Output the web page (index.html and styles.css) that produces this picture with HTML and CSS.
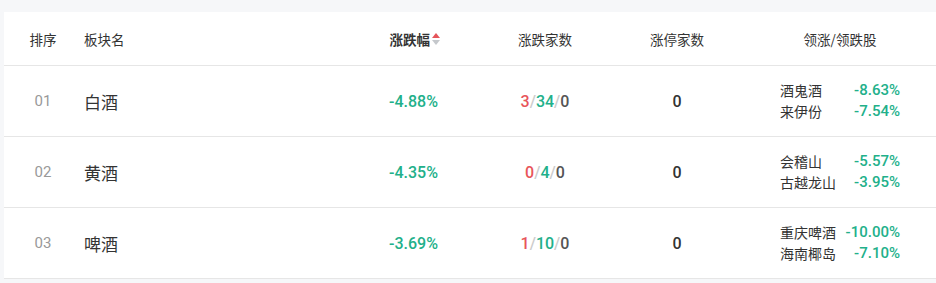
FILE: index.html
```html
<!DOCTYPE html>
<html lang="zh-CN">
<head>
<meta charset="utf-8">
<link rel="stylesheet" href="styles.css">
</head>
<body>
<div class="panel">
  <div class="row head">
    <div class="c-idx">排序</div>
    <div class="c-name">板块名</div>
    <div class="c-chg sort">涨跌幅<span class="arrows"><i class="up"></i><i class="down"></i></span></div>
    <div class="c-cnt">涨跌家数</div>
    <div class="c-lim">涨停家数</div>
    <div class="c-lead">领涨/领跌股</div>
  </div>
  <div class="row">
    <div class="c-idx num">01</div>
    <div class="c-name bname">白酒</div>
    <div class="c-chg num green">-4.88%</div>
    <div class="c-cnt num"><span class="red">3</span><span class="sl">/</span><span class="green">34</span><span class="sl">/</span><span class="dk">0</span></div>
    <div class="c-lim num dk">0</div>
    <div class="c-lead"><div class="stocks"><div class="st"><span>酒鬼酒</span><span class="num green">-8.63%</span></div><div class="st"><span>来伊份</span><span class="num green">-7.54%</span></div></div></div>
  </div>
  <div class="row">
    <div class="c-idx num">02</div>
    <div class="c-name bname">黄酒</div>
    <div class="c-chg num green">-4.35%</div>
    <div class="c-cnt num"><span class="red">0</span><span class="sl">/</span><span class="green">4</span><span class="sl">/</span><span class="dk">0</span></div>
    <div class="c-lim num dk">0</div>
    <div class="c-lead"><div class="stocks"><div class="st"><span>会稽山</span><span class="num green">-5.57%</span></div><div class="st"><span>古越龙山</span><span class="num green">-3.95%</span></div></div></div>
  </div>
  <div class="row">
    <div class="c-idx num">03</div>
    <div class="c-name bname">啤酒</div>
    <div class="c-chg num green">-3.69%</div>
    <div class="c-cnt num"><span class="red">1</span><span class="sl">/</span><span class="green">10</span><span class="sl">/</span><span class="dk">0</span></div>
    <div class="c-lim num dk">0</div>
    <div class="c-lead"><div class="stocks"><div class="st"><span>重庆啤酒</span><span class="num green">-10.00%</span></div><div class="st"><span>海南椰岛</span><span class="num green">-7.10%</span></div></div></div>
  </div>
</div>
</body>
</html>
```
FILE: styles.css
```css
html, body { margin: 0; padding: 0; }
body {
  background: #f6f7f9;
  font-family: "Noto Sans CJK SC", "Noto Sans", sans-serif;
  color: #333;
  padding: 12px 0 0 4px;
}
.panel { background: #fff; }
.row {
  display: grid;
  grid-template-columns: 78px 258px 140px 130px 134px 1fr;
  align-items: center;
  height: 70px;
  border-bottom: 1px solid #e6e6e6;
}
.row.head { height: 53px; font-size: 13.5px; color: #333; }
.c-idx, .c-cnt, .c-lim { text-align: center; }
.c-name { padding-left: 2px; }
.c-chg { text-align: right; padding-right: 42px; }
.c-lead { display: flex; justify-content: center; }
.head .c-lead { text-align: center; display: block; }
.head .c-chg { font-weight: bold; padding-right: 40px; display: flex; justify-content: flex-end; align-items: center; }
.arrows { display: inline-flex; flex-direction: column; margin-left: 2px; gap: 2px; }
.arrows i { display: block; width: 0; height: 0; border-left: 4.5px solid transparent; border-right: 4.5px solid transparent; }
.arrows .up { border-bottom: 5px solid #e5555a; }
.arrows .down { border-top: 5px solid #c5c8cc; }
.num { font-family: Roboto, "Noto Sans", sans-serif; }
.c-idx.num { font-size: 15px; color: #999; }
.bname { font-size: 17px; color: #333; }
.c-chg.num, .c-cnt.num, .c-lim.num { font-size: 16px; font-weight: 500; }
.green { color: #22b08a; }
.red { color: #e8555a; }
.sl { color: #cccccc; }
.dk { color: #555; }
.c-lim.dk { color: #333; }
.stocks { width: 120px; font-size: 14px; }
.st { display: flex; justify-content: space-between; align-items: center; line-height: 21px; color: #333; }
.st .num { font-size: 15px; font-weight: 500; }
```
